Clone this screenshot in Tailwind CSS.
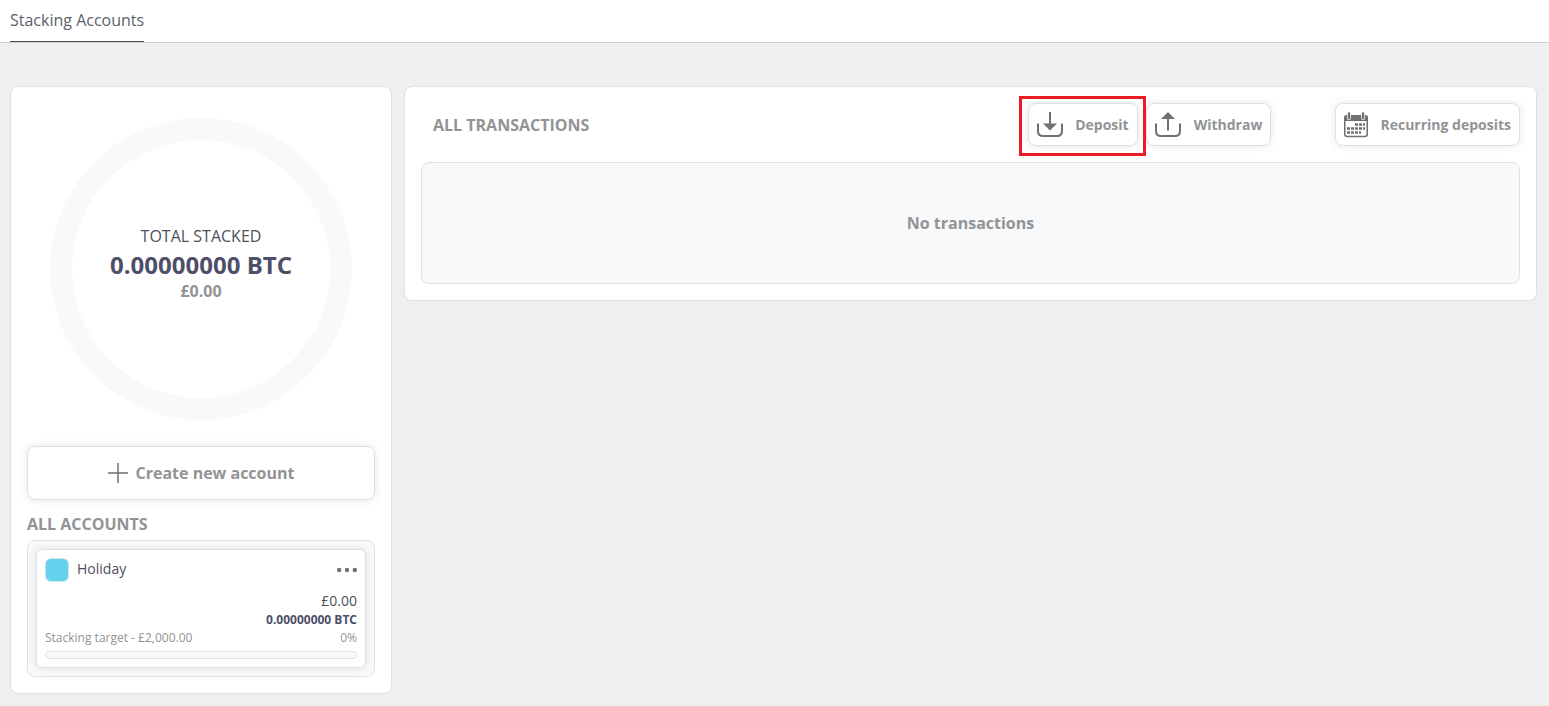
<!DOCTYPE html>
<html lang="en">
<head>
  <meta charset="UTF-8">
  <meta name="viewport" content="width=device-width, initial-scale=1.0">
  <title>Stacking Accounts</title>
  <script src="https://cdn.jsdelivr.net/npm/@tailwindcss/browser@4"></script>
</head>
<body class="min-h-screen bg-[#efefef] font-['Open_Sans','Noto_Sans',sans-serif] text-base text-[#929395]">

  <!-- Tabs -->
  <nav class="flex h-[43px] border-b border-[#cfcfd1] bg-white px-[10px]">
    <a href="#" class="flex h-[42px] items-center border-b border-[#4d4f5c] pb-[2px] text-[#5d5f6b]">Stacking Accounts</a>
  </nav>

  <main class="flex items-start gap-3 pt-[43px] pr-3 pl-[10px]">

    <!-- Accounts -->
    <aside class="w-[382px] shrink-0 rounded-lg border border-[#dfe0e6] bg-white p-4">
      <div class="mx-auto mt-[15px] flex size-[302px] flex-col items-center justify-center rounded-full border-[22px] border-[#f8f9fb] pb-[14px] text-center">
        <p class="text-[#4d4f5c]">TOTAL STACKED</p>
        <p class="text-2xl leading-[34px] font-bold text-[#4d4f68]">0.00000000 BTC</p>
        <p class="leading-[18px] font-bold">£0.00</p>
      </div>

      <button type="button" class="mt-[26px] flex h-[54px] w-full items-center justify-center gap-2 rounded-lg border border-[#dfe0e6] bg-white font-bold shadow-[0_0_8px_rgba(0,0,0,0.1)]">
        <svg class="size-5" viewBox="0 0 20 20" fill="none" stroke="#707070" stroke-width="1.5" aria-hidden="true">
          <path d="M10 0v20M0 10h20"/>
        </svg>
        Create new account
      </button>

      <h2 class="mt-3 font-bold">ALL ACCOUNTS</h2>
      <div class="mt-1 rounded-lg border border-[#dfe0e6] bg-[#f8f9fb] p-2">
        <div class="rounded-md border border-[#dfe0e6] bg-white p-2 shadow-[0_0_8px_rgba(0,0,0,0.1)]">
          <div class="flex h-6 items-center gap-2">
            <span class="size-6 rounded-md border border-[#d5e3e8] bg-[#63d2ec]"></span>
            <span class="grow pb-[2px] text-sm text-[#4d4f5c]">Holiday</span>
            <button type="button" aria-label="Account options">
              <svg class="h-[6px] w-5" viewBox="0 0 20 6" fill="#707070" aria-hidden="true">
                <circle cx="2.2" cy="3" r="2.2"/><circle cx="10" cy="3" r="2.2"/><circle cx="17.8" cy="3" r="2.2"/>
              </svg>
            </button>
          </div>
          <p class="mt-[9px] text-right text-sm text-[#4d4f5c]">£0.00</p>
          <p class="text-right text-xs leading-[18px] font-bold text-[#4d4f68]">0.00000000 BTC</p>
          <div class="flex justify-between text-xs leading-[18px]">
            <span>Stacking target - £2,000.00</span>
            <span>0%</span>
          </div>
          <div class="mt-1 h-2 rounded-full border border-[#dfe0e6] bg-[#f8f9fb]"></div>
        </div>
      </div>
    </aside>

    <!-- Transactions -->
    <section class="grow rounded-lg border border-[#dfe0e6] bg-white p-4">
      <div class="flex h-[43px] items-center text-sm font-bold">
        <h2 class="grow pl-3 text-base">ALL TRANSACTIONS</h2>
        <div class="relative mr-2">
          <button type="button" class="flex h-[43px] items-center gap-3 rounded-lg border border-[#dfe0e6] bg-white px-2 shadow-[0_0_8px_rgba(0,0,0,0.1)]">
            <svg class="h-[26px] w-[26px]" viewBox="0 0 26 26" aria-hidden="true">
              <path d="M1 11.500v7.500q0 5 5 5h14q5 0 5-5v-7.500" fill="none" stroke="#707070" stroke-width="2"/>
              <path d="M12 0h2v11.500h6l-7 7-7-7h6z" fill="#707070"/>
            </svg>
            Deposit
          </button>
          <div class="pointer-events-none absolute -top-[7px] -right-2 -bottom-[10px] -left-[9px] border-[3px] border-[#ec1c24]"></div>
        </div>
        <button type="button" class="mr-16 flex h-[43px] items-center gap-[13px] rounded-lg border border-[#dfe0e6] bg-white px-2 shadow-[0_0_8px_rgba(0,0,0,0.1)]">
          <svg class="h-[26px] w-[26px]" viewBox="0 0 26 26" aria-hidden="true">
            <path d="M1 11.500v7.500q0 5 5 5h14q5 0 5-5v-7.500" fill="none" stroke="#707070" stroke-width="2"/>
            <path d="M13 0l7 7h-6v11.500h-2v-11.500h-6z" fill="#707070"/>
          </svg>
          Withdraw
        </button>
        <button type="button" class="flex h-[43px] items-center gap-3 rounded-lg border border-[#dfe0e6] bg-white px-2 shadow-[0_0_8px_rgba(0,0,0,0.1)]">
          <svg class="h-[26px] w-6" viewBox="0 0 24 26" aria-hidden="true">
            <rect x="0.750" y="4" width="22.500" height="20.500" rx="2.500" fill="white" stroke="#707070" stroke-width="1.500"/>
            <path d="M0 9V6q0-3 3-3h18q3 0 3 3v3z" fill="#707070"/>
            <path d="M5 3v3M19 3v3" stroke="white" stroke-width="4" stroke-linecap="round"/>
            <path d="M5 1.500v4.500M19 1.500v4.500" stroke="#707070" stroke-width="2.500" stroke-linecap="round"/>
            <path d="M11 12.500h10M3 16.500h18M3 20.500h14" stroke="#707070" stroke-width="2.500" stroke-dasharray="3 1"/>
          </svg>
          Recurring deposits
        </button>
      </div>

      <div class="mt-4 flex h-[122px] items-center justify-center rounded-lg border border-[#dfe0e6] bg-[#f8f9fb] font-bold">No transactions</div>
    </section>

  </main>
</body>
</html>
